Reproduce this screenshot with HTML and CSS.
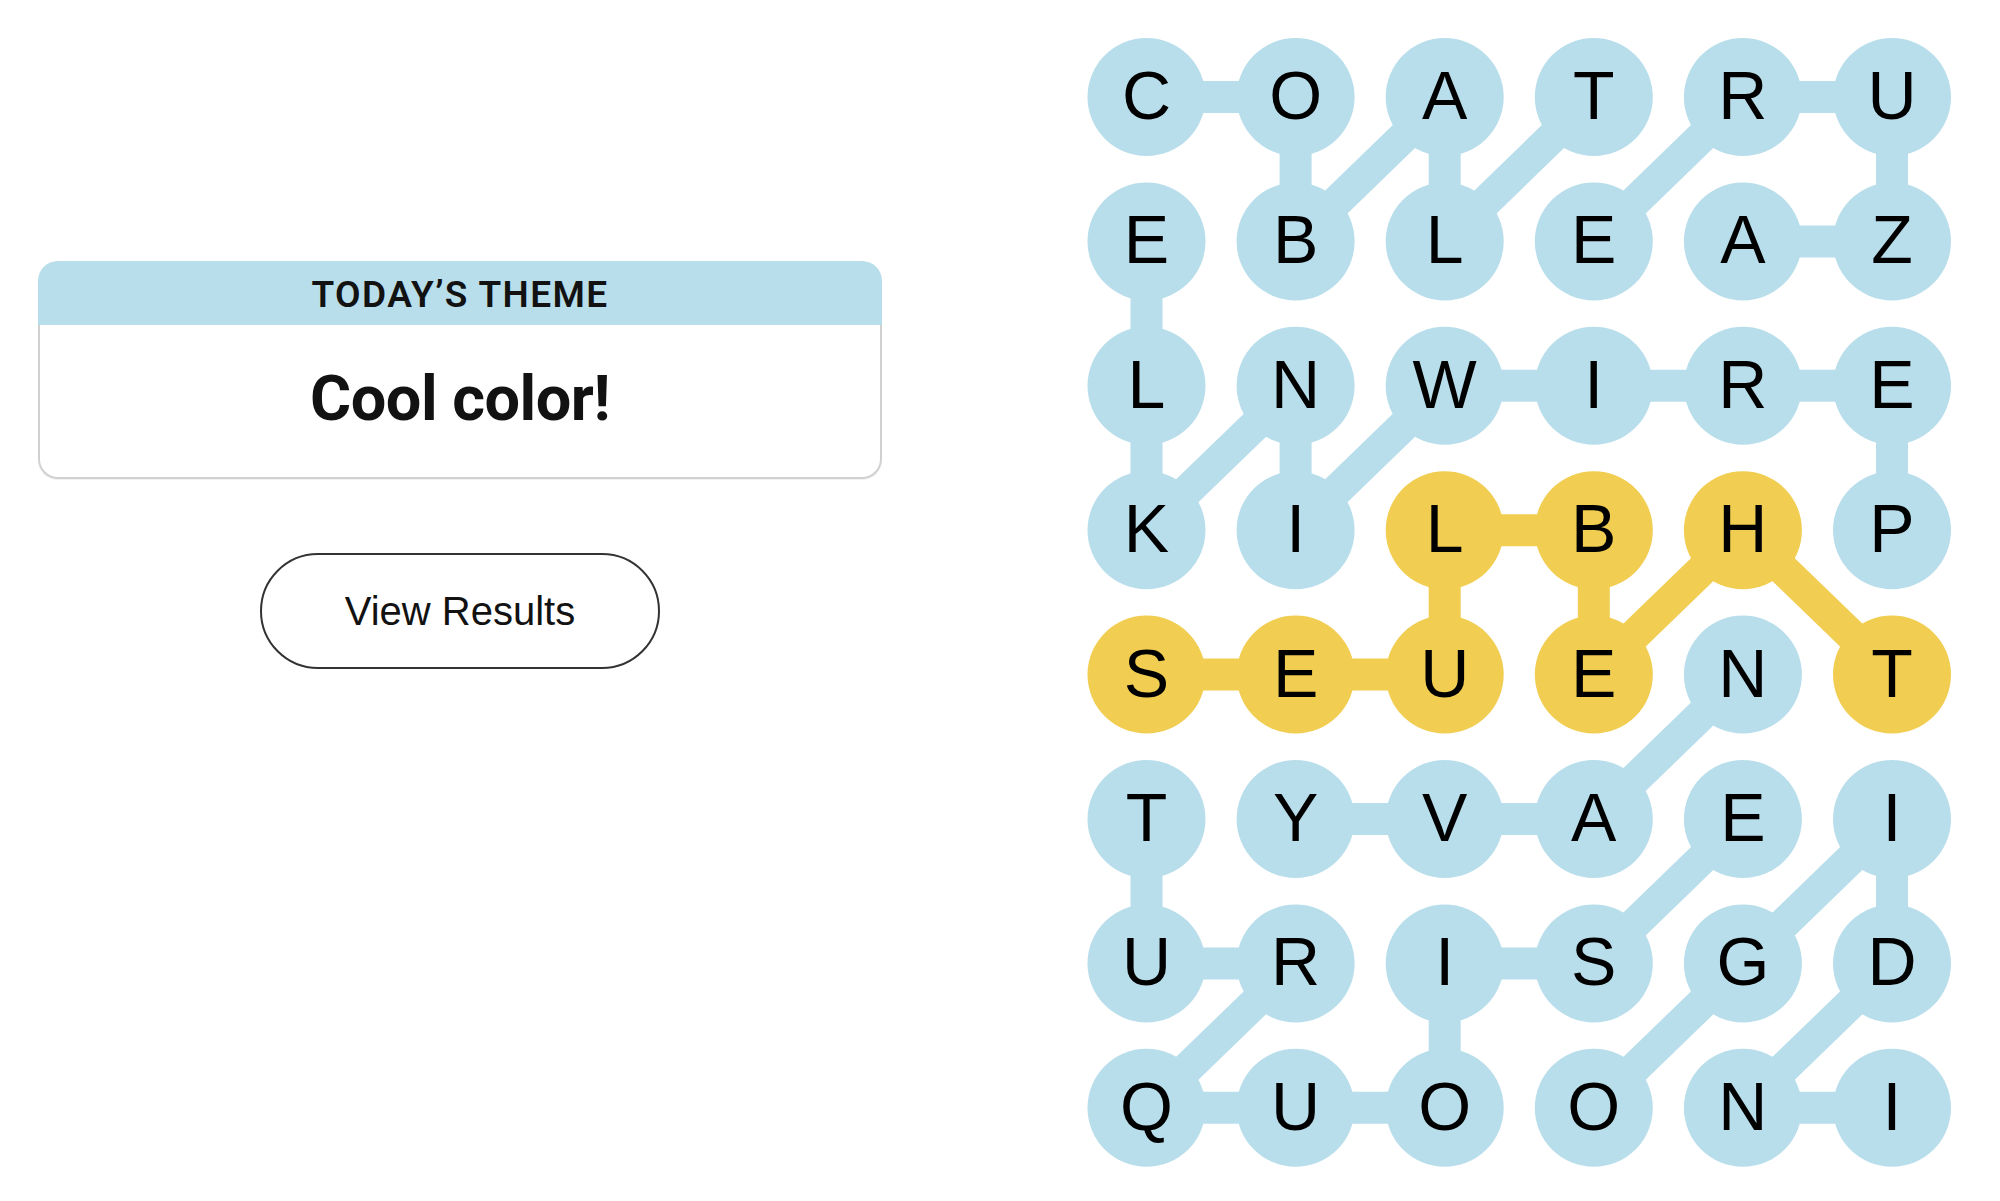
FILE: index.html
```html
<!DOCTYPE html>
<html lang="en">
<head>
<meta charset="utf-8">
<title>Strands</title>
<link rel="stylesheet" href="styles.css">
</head>
<body>
<main class="page">
  <section class="side">
    <div class="theme-card">
      <div class="theme-head">TODAY’S THEME</div>
      <div class="theme-body">Cool color!</div>
    </div>
    <button class="results-btn" type="button">View Results</button>
  </section>
  <svg class="board" width="1000" height="1201" viewBox="1000 0 1000 1201" xmlns="http://www.w3.org/2000/svg">
    <g id="lines" stroke-width="32" stroke-linecap="butt" fill="none"></g>
    <g id="dots"></g>
    <g id="letters" font-family="'Liberation Sans', Arial, sans-serif" font-size="68" text-anchor="middle" fill="#000"></g>
  </svg>
</main>
<script src="board.js"></script>
</body>
</html>
```

FILE: styles.css
```css
html, body {
  margin: 0;
  padding: 0;
  background: #ffffff;
}
.page {
  display: flex;
  width: 2000px;
  height: 1201px;
  overflow: hidden;
}
.side {
  width: 844px;
  margin-left: 38px;
  padding-top: 261px;
  display: flex;
  flex-direction: column;
  align-items: center;
  flex: none;
}
.theme-card {
  width: 844px;
  display: flex;
  flex-direction: column;
}
.theme-head {
  height: 64px;
  background: #b8deeb;
  border-radius: 20px 20px 0 0;
  display: flex;
  align-items: center;
  justify-content: center;
  font-family: Roboto, "Liberation Sans", sans-serif;
  font-weight: 600;
  font-size: 37px;
  letter-spacing: 1.4px;
  color: #121212;
  padding-top: 2px;
  box-sizing: border-box;
}
.theme-body {
  height: 154px;
  box-sizing: border-box;
  border: 2px solid #d0d0d0;
  border-top: none;
  border-radius: 0 0 20px 20px;
  display: flex;
  align-items: center;
  justify-content: center;
  font-family: Roboto, "Liberation Sans", sans-serif;
  font-weight: 700;
  font-size: 63px;
  letter-spacing: -0.5px;
  color: #121212;
  padding-bottom: 6px;
  box-shadow: 0 1px 1px rgba(0,0,0,0.06);
}
.results-btn {
  margin-top: 74px;
  width: 400px;
  height: 116px;
  border: 2px solid #333333;
  border-radius: 58px;
  background: #ffffff;
  font-family: "Liberation Sans", Arial, sans-serif;
  font-size: 40px;
  color: #121212;
  padding: 0;
  cursor: pointer;
}
.board {
  flex: none;
  margin-left: 118px;
  display: block;
}
```

FILE: board.js
```js
(function () {
  var NS = "http://www.w3.org/2000/svg";
  var grid = [
    "COATRU",
    "EBLEAZ",
    "LNWIRE",
    "KILBHP",
    "SEUENT",
    "TYVAEI",
    "URISGD",
    "QUOONI"
  ];
  var yellowCells = { "3,2":1, "3,3":1, "3,4":1, "4,0":1, "4,1":1, "4,2":1, "4,3":1, "4,5":1 };
  var BLUE = "#b8deeb", YELLOW = "#f1cd51";
  var links = [
    [0,0,0,1],[0,1,1,1],[1,1,0,2],[0,2,1,2],[1,2,0,3],
    [1,4,1,5],[1,5,0,5],[0,5,0,4],[0,4,1,3],
    [1,0,2,0],[2,0,3,0],[3,0,2,1],[2,1,3,1],[3,1,2,2],[2,2,2,3],[2,3,2,4],[2,4,2,5],[2,5,3,5],
    [4,4,5,3],[5,3,5,2],[5,2,5,1],
    [5,0,6,0],[6,0,6,1],[6,1,7,0],[7,0,7,1],[7,1,7,2],[7,2,6,2],[6,2,6,3],[6,3,5,4],
    [7,5,7,4],[7,4,6,5],[6,5,5,5],[5,5,6,4],[6,4,7,3],
    [4,0,4,1,1],[4,1,4,2,1],[4,2,3,2,1],[3,2,3,3,1],[3,3,4,3,1],[4,3,3,4,1],[3,4,4,5,1]
  ];
  function cx(c) { return 1146.5 + 149.1 * c; }
  function cy(r) { return 97 + 144.4 * r; }
  var gl = document.getElementById("lines");
  var gd = document.getElementById("dots");
  var gt = document.getElementById("letters");
  links.forEach(function (l) {
    var ln = document.createElementNS(NS, "line");
    ln.setAttribute("x1", cx(l[1]));
    ln.setAttribute("y1", cy(l[0]));
    ln.setAttribute("x2", cx(l[3]));
    ln.setAttribute("y2", cy(l[2]));
    ln.setAttribute("stroke", l[4] ? YELLOW : BLUE);
    gl.appendChild(ln);
  });
  grid.forEach(function (row, r) {
    row.split("").forEach(function (ch, c) {
      var ci = document.createElementNS(NS, "circle");
      ci.setAttribute("cx", cx(c));
      ci.setAttribute("cy", cy(r));
      ci.setAttribute("r", 59);
      ci.setAttribute("fill", yellowCells[r + "," + c] ? YELLOW : BLUE);
      gd.appendChild(ci);
      var t = document.createElementNS(NS, "text");
      t.setAttribute("x", cx(c));
      t.setAttribute("y", cy(r) + 22);
      t.textContent = ch;
      gt.appendChild(t);
    });
  });
})();
```
